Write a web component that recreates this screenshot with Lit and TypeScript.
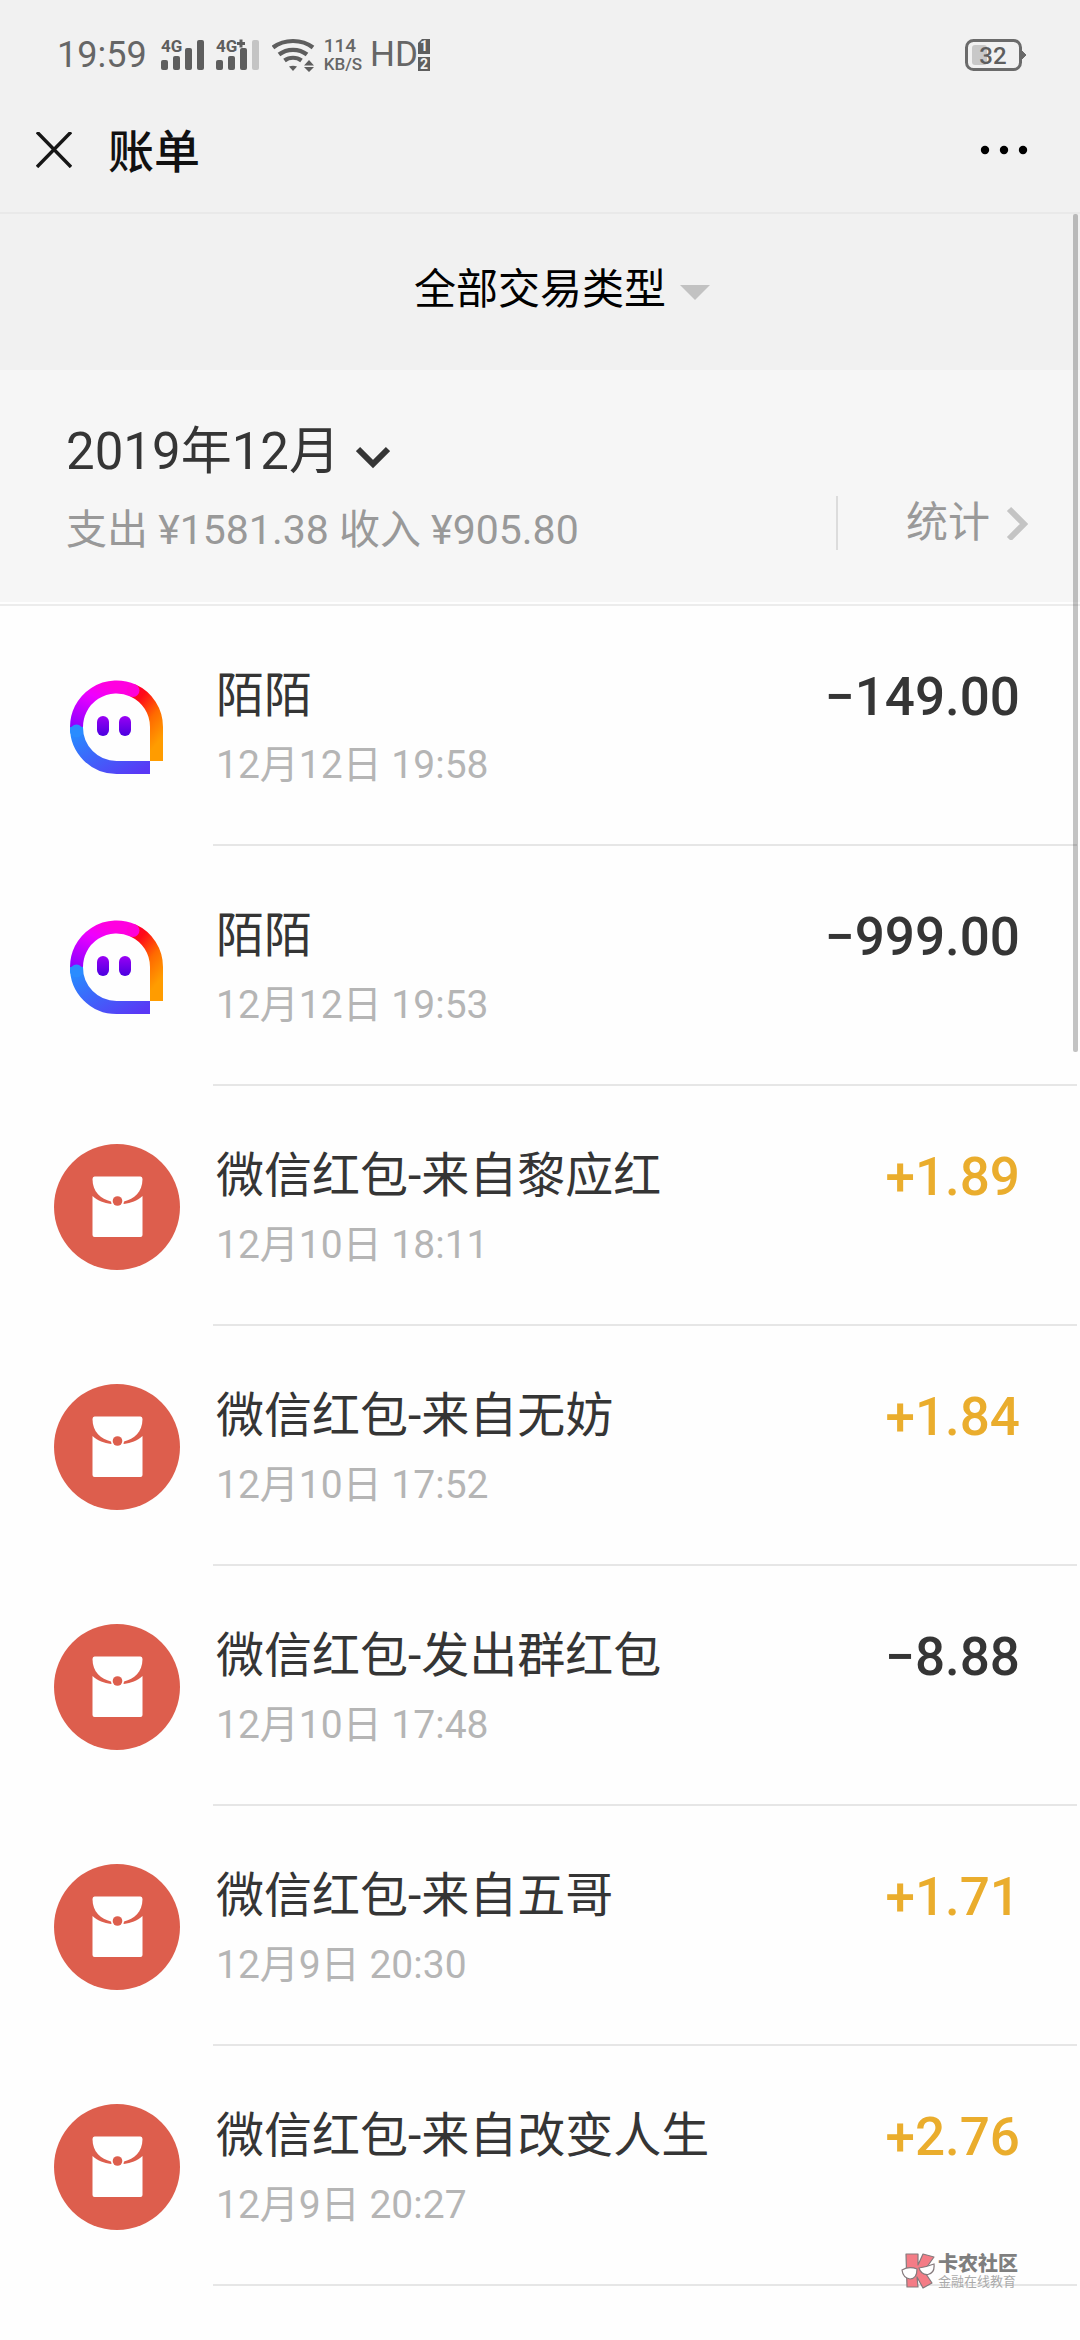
import { LitElement, html, css, svg } from "lit";
import { customElement, property } from "lit/decorators.js";

type Kind = "momo" | "packet";

interface Transaction {
  kind: Kind;
  title: string;
  time: string;
  amount: string;
}

const TRANSACTIONS: Transaction[] = [
  { kind: "momo", title: "陌陌", time: "12月12日 19:58", amount: "−149.00" },
  { kind: "momo", title: "陌陌", time: "12月12日 19:53", amount: "−999.00" },
  { kind: "packet", title: "微信红包-来自黎应红", time: "12月10日 18:11", amount: "+1.89" },
  { kind: "packet", title: "微信红包-来自无妨", time: "12月10日 17:52", amount: "+1.84" },
  { kind: "packet", title: "微信红包-发出群红包", time: "12月10日 17:48", amount: "−8.88" },
  { kind: "packet", title: "微信红包-来自五哥", time: "12月9日 20:30", amount: "+1.71" },
  { kind: "packet", title: "微信红包-来自改变人生", time: "12月9日 20:27", amount: "+2.76" },
];

const base = css`
  *,
  *::before,
  *::after {
    box-sizing: border-box;
  }
  :host {
    display: block;
    font-family: Roboto, "Noto Sans CJK SC", sans-serif;
  }
  svg {
    display: block;
    flex: none;
  }
  button {
    margin: 0;
    padding: 0;
    border: 0;
    background: none;
    color: inherit;
    font: inherit;
    cursor: pointer;
  }
`;

@customElement("status-bar")
class StatusBar extends LitElement {
  static styles = [
    base,
    css`
      .bar {
        display: flex;
        align-items: center;
        height: 88px;
        padding: 22px 54px 0 57px;
        gap: 8px;
        color: #666;
        font-size: 36px;
        line-height: 36px;
      }
      .clock {
        margin-right: -3px;
      }
      .speed {
        display: flex;
        flex-direction: column;
        font-size: 17px;
        font-weight: 500;
        line-height: 18px;
      }
      .rate {
        font-size: 19px;
      }
      .volte {
        display: flex;
        align-items: center;
        font-size: 35px;
      }
      .battery {
        margin-left: auto;
      }
      .tiny {
        font: 700 17px Roboto, sans-serif;
      }
      .sim {
        font: 700 14px Roboto, sans-serif;
      }
      .charge {
        font: 500 24px Roboto, sans-serif;
      }
    `,
  ];

  render() {
    return html`
      <div class="bar">
        <span class="clock">19:59</span>
        <svg width="56" height="36" viewBox="0 0 56 36" fill="#5e5e5e" aria-hidden="true">
          <text class="tiny" x="9" y="15">4G</text>
          <rect x="9" y="23" width="7" height="10" rx="2" />
          <rect x="21" y="19" width="7" height="14" rx="2" />
          <rect x="33" y="11" width="7" height="22" rx="2" />
          <rect x="45" y="3" width="7" height="30" rx="2" />
        </svg>
        <svg width="48" height="36" viewBox="0 0 48 36" fill="#5e5e5e" aria-hidden="true">
          <text class="tiny" x="0" y="15">4G</text>
          <path d="M23.500 2.500h3v2.500h2.500v3h-2.500v2.500h-3v-2.500h-2.500v-3h2.500z" />
          <rect x="0" y="23" width="7" height="10" rx="2" />
          <rect x="12" y="19" width="7" height="14" rx="2" />
          <rect x="24" y="11" width="7" height="22" rx="2" />
          <rect x="36" y="3" width="7" height="30" rx="2" fill="#c4c4c4" />
        </svg>
        <svg width="44" height="36" viewBox="0 0 44 36" fill="none" stroke="#5e5e5e" stroke-width="4.200" aria-hidden="true">
          <path d="M1 10.500C12 1.800 30 1.800 41 10.500" />
          <path d="M7 17.500C15 11.200 27 11.200 35 17.500" />
          <path d="M12.500 23.500C17.500 19.800 24.500 19.800 29.500 23.500" />
          <path d="M17 29.500q4-1.600 8 0L21 34z" fill="#5e5e5e" stroke="none" />
          <path d="M37 23l5 5.500H32zM37 35l5-5H32z" fill="#5e5e5e" stroke="none" />
        </svg>
        <span class="speed"><span class="rate">114</span><span>KB/S</span></span>
        <span class="volte">
          HD
          <svg width="12" height="36" viewBox="0 0 12 36" aria-hidden="true">
            <path d="M4 2h8v15H0V6z" fill="#5e5e5e" />
            <path d="M0 20h12v14H0z" fill="#5e5e5e" />
            <text class="sim" x="6" y="14" text-anchor="middle" fill="#f1f1f1">1</text>
            <text class="sim" x="6" y="32" text-anchor="middle" fill="#f1f1f1">2</text>
          </svg>
        </span>
        <svg class="battery" width="61" height="36" viewBox="0 0 61 36" role="img" aria-label="32%">
          <rect x="7" y="8" width="15" height="20" rx="3" fill="#c8c8c8" />
          <rect x="1.500" y="3.500" width="54" height="29" rx="7" fill="none" stroke="#6b6b6b" stroke-width="3" />
          <path d="M57 14l4 4-4 4z" fill="#6b6b6b" stroke="#6b6b6b" />
          <text class="charge" x="28" y="27" text-anchor="middle" fill="#5e5e5e">32</text>
        </svg>
      </div>
    `;
  }
}

@customElement("transaction-row")
class TransactionRow extends LitElement {
  @property({ attribute: false }) item!: Transaction;

  static styles = [
    base,
    css`
      .row {
        display: flex;
        gap: 33px;
        min-height: 240px;
        padding: 0 3px 0 54px;
      }
      .icon {
        margin-top: 58px;
      }
      .body {
        flex: 1;
        display: flex;
        justify-content: space-between;
        padding: 56px 57px 0 3px;
        border-bottom: 2px solid #e6e6e6;
      }
      .title {
        font-size: 48px;
        line-height: 68px;
        color: #353535;
      }
      .time {
        font-size: 39px;
        line-height: 70px;
        color: #b5b5b5;
      }
      .amount {
        font-size: 53px;
        font-weight: 500;
        line-height: 70px;
        color: #353535;
      }
      .income {
        color: #eaad2d;
      }
    `,
  ];

  private momo() {
    return svg`
      <defs>
        <linearGradient id="violet" x1="0" y1="1" x2="0.600" y2="0">
          <stop offset="0" stop-color="#9000ff" />
          <stop offset="0.700" stop-color="#ee00ff" />
          <stop offset="1" stop-color="#ff00e0" />
        </linearGradient>
        <linearGradient id="fire" x1="0" y1="0" x2="0.400" y2="1">
          <stop offset="0" stop-color="#ff0030" />
          <stop offset="0.200" stop-color="#ff0a18" />
          <stop offset="0.600" stop-color="#ff6a00" />
          <stop offset="1" stop-color="#ff9c00" />
        </linearGradient>
        <linearGradient id="sea" x1="0" y1="0" x2="1" y2="1">
          <stop offset="0" stop-color="#2490ff" />
          <stop offset="1" stop-color="#5a38f5" />
        </linearGradient>
        <linearGradient id="eye" x1="0" y1="0" x2="0" y2="1">
          <stop offset="0" stop-color="#9a00f4" />
          <stop offset="1" stop-color="#4a00e0" />
        </linearGradient>
      </defs>
      <g fill="none" stroke-width="13">
        <path d="M79 26.500A40 40 0 0 1 102.500 63V97" stroke="url(#fire)" />
        <path d="M22.500 63A40 40 0 0 1 79 26.500" stroke="url(#violet)" />
        <path d="M96 103.500H62.500A40 40 0 0 1 22.500 63" stroke="url(#sea)" />
      </g>
      <circle cx="79" cy="26.500" r="6.500" fill="#ff00d8" />
      <circle cx="22.500" cy="67" r="6.500" fill="#2a8cff" />
      <rect x="43" y="52" width="12" height="20" rx="6" fill="url(#eye)" />
      <rect x="65" y="52" width="12" height="20" rx="6" fill="url(#eye)" />
    `;
  }

  private packet() {
    return svg`
      <circle cx="63" cy="63" r="63" fill="#dd5e4d" />
      <path d="M40.500 32.500H86.500Q88.500 32.500 88.500 35C88.500 48 80 55 70 57.500H57C47 55 38.500 48 38.500 35Q38.500 32.500 40.500 32.500Z" fill="#fff" />
      <path d="M38.500 52C44 57 50 59 57 60H70C77 59 83 57 88.500 52V91Q88.500 93 86.500 93H40.500Q38.500 93 38.500 91Z" fill="#fff" />
      <circle cx="63.500" cy="57.500" r="6.500" fill="#fff" />
      <circle cx="63.500" cy="57" r="4.800" fill="#dd5e4d" />
    `;
  }

  render() {
    const { kind, title, time, amount } = this.item;
    return html`
      <article class="row">
        <svg class="icon" width="126" height="126" viewBox="0 0 126 126" aria-hidden="true">
          ${kind === "momo" ? this.momo() : this.packet()}
        </svg>
        <div class="body">
          <div>
            <div class="title">${title}</div>
            <div class="time">${time}</div>
          </div>
          <div class="amount ${amount.startsWith("+") ? "income" : ""}">${amount}</div>
        </div>
      </article>
    `;
  }
}

@customElement("app-root")
class AppRoot extends LitElement {
  static styles = [
    base,
    css`
      :host {
        position: relative;
        min-height: 100vh;
        overflow: hidden;
        background: #fefefe;
      }
      .top {
        background: #f1f1f1;
      }
      .nav {
        display: flex;
        align-items: center;
        gap: 36px;
        height: 126px;
        padding: 0 52px 0 36px;
        border-bottom: 2px solid #e9e9e9;
        color: #111;
      }
      .heading {
        margin: 0;
        padding-top: 3px;
        font-size: 46px;
        font-weight: 500;
        line-height: 60px;
      }
      .more {
        margin-left: auto;
      }
      .filter {
        display: flex;
        align-items: center;
        justify-content: center;
        gap: 14px;
        width: 100%;
        height: 156px;
        padding-bottom: 4px;
        padding-left: 44px;
        font-size: 42px;
        line-height: 60px;
        color: #000;
      }
      .summary {
        display: flex;
        justify-content: space-between;
        align-items: flex-start;
        height: 234px;
        padding: 46px 52px 0 66px;
        border-bottom: 2px solid #fefefe;
        background: #f6f6f6;
      }
      .month {
        display: flex;
        align-items: center;
        gap: 16px;
        font-size: 51px;
        line-height: 72px;
        color: #353535;
      }
      .arrow {
        margin-top: 12px;
      }
      .totals {
        margin: 12px 0 0;
        font-size: 41px;
        line-height: 60px;
        color: #999;
      }
      .stats {
        display: flex;
        align-items: center;
        gap: 16px;
        height: 54px;
        margin-top: 80px;
        padding-left: 68px;
        border-left: 2px solid #dcdcdc;
        font-size: 42px;
        line-height: 54px;
        color: #999;
        text-decoration: none;
      }
      .list {
        margin: 0;
        padding: 0;
        list-style: none;
        border-top: 2px solid #ececec;
      }
      .thumb {
        position: absolute;
        top: 214px;
        right: 2px;
        width: 5px;
        height: 838px;
        border-radius: 2px;
        background: rgba(0, 0, 0, 0.23);
      }
      .mark {
        position: absolute;
        right: 62px;
        bottom: 51px;
        display: flex;
        align-items: center;
        gap: 3px;
      }
      .brand {
        font-size: 20px;
        font-weight: 900;
        line-height: 22px;
        color: #7f7f7f;
      }
      .motto {
        font-size: 13px;
        line-height: 14px;
        color: #aaa;
      }
    `,
  ];

  render() {
    return html`
      <header class="top">
        <status-bar></status-bar>
        <div class="nav">
          <button type="button" aria-label="关闭">
            <svg width="36" height="36" viewBox="0 0 36 36" stroke="#161616" stroke-width="3.400">
              <path d="M1 0L35 35M35 0L1 35" />
            </svg>
          </button>
          <h1 class="heading">账单</h1>
          <button class="more" type="button" aria-label="更多">
            <svg width="48" height="36" viewBox="0 0 48 36" fill="#000">
              <circle cx="5" cy="18" r="4.200" />
              <circle cx="24" cy="18" r="4.200" />
              <circle cx="43" cy="18" r="4.200" />
            </svg>
          </button>
        </div>
        <button class="filter" type="button">
          <span>全部交易类型</span>
          <svg width="30" height="20" viewBox="0 0 30 20" fill="#c2c2c2" aria-hidden="true">
            <path d="M0 5H30L15 20Z" />
          </svg>
        </button>
      </header>
      <section class="summary">
        <div>
          <button class="month" type="button">
            <span>2019年12月</span>
            <svg class="arrow" width="34" height="24" viewBox="0 0 34 24" fill="none" stroke="#353535" stroke-width="6" aria-hidden="true">
              <path d="M2 3L17 18L32 3" />
            </svg>
          </button>
          <p class="totals">支出 ¥1581.38 收入 ¥905.80</p>
        </div>
        <a class="stats" href="#stats">
          <span>统计</span>
          <svg width="22" height="34" viewBox="0 0 22 34" fill="none" stroke="#c4c4c4" stroke-width="6" aria-hidden="true">
            <path d="M3 3L18 18L3 33" />
          </svg>
        </a>
      </section>
      <ul class="list">
        ${TRANSACTIONS.map((item) => html`<li><transaction-row .item=${item}></transaction-row></li>`)}
      </ul>
      <div class="thumb"></div>
      <div class="mark">
        <svg width="34" height="36" viewBox="0 0 34 36" aria-hidden="true">
          <g fill="#f47c86" stroke="#857a7d" stroke-width="1.200" stroke-linejoin="round">
            <path d="M5 1H17V12L22 1L33 4L23 18L31 30L22 35L16 24L17 34L6 34Z" />
          </g>
          <g fill="#fff" stroke="#857a7d" stroke-width="1.200">
            <path d="M1 17Q8 13 16 16Q16 26 9 26Q2 25 1 17Z" />
            <path d="M18 15Q25 14 33 11Q34 20 27 21.500Q20 22 18 15Z" />
          </g>
        </svg>
        <div>
          <div class="brand">卡农社区</div>
          <div class="motto">金融在线教育</div>
        </div>
      </div>
    `;
  }
}
